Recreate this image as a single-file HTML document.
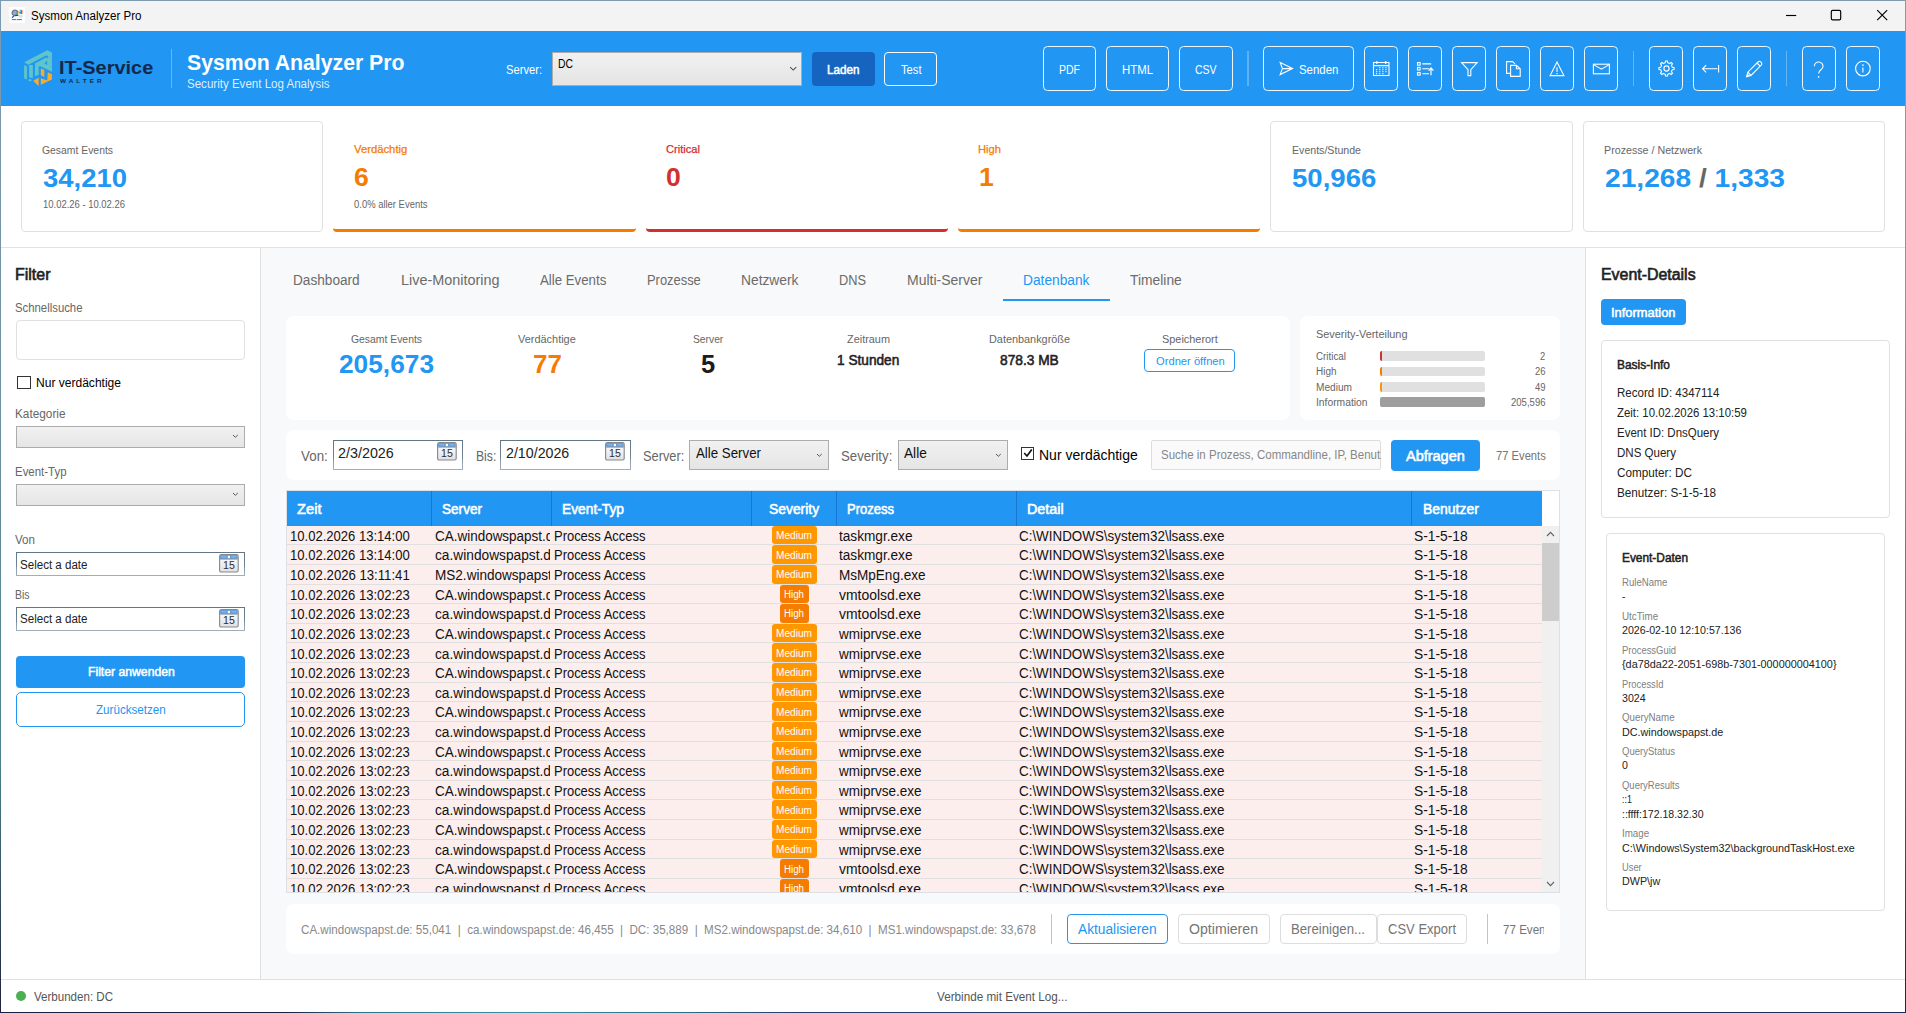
<!DOCTYPE html>
<html lang="de"><head><meta charset="utf-8"><title>Sysmon Analyzer Pro</title>
<style>
html,body{margin:0;padding:0;overflow:hidden}
body{width:1906px;height:1013px;overflow:hidden;position:relative;background:#1e2140;font-family:"Liberation Sans",sans-serif}
.a{position:absolute;box-sizing:border-box}
.t{position:absolute;white-space:pre;line-height:1;transform-origin:0 0}
svg{position:absolute;overflow:visible}
</style></head>
<body>
<div class="a" style="left:0px;top:0px;width:1906px;height:1px;background:#7c9bb1"></div>
<div class="a" style="left:0px;top:1px;width:1px;height:1012px;background:linear-gradient(#7c9bb1,#6f8fa6 40%,#4d8192 75%,#1e2140)"></div>
<div class="a" style="left:1905px;top:1px;width:1px;height:1012px;background:linear-gradient(#7c9bb1,#8496a6 30%,#5a6a80 70%,#1e2140)"></div>
<div class="a" style="left:0px;top:1012px;width:1906px;height:1px;background:linear-gradient(90deg,#1b1d3c 0,#1b1d3c 15%,#2c7688 19%,#3a8fa6 27%,#2a6c8a 36%,#233c6c 42%,#1f2c58 100%)"></div>
<div class="a" style="left:1px;top:1px;width:1904px;height:30px;background:#f3f3f3"></div>
<svg style="left:9px;top:7px" width="16" height="16" viewBox="0 0 16 16"><rect width="16" height="16" fill="#fefefe"/>
<rect x="9.6" y="7.6" width="4" height="3" fill="#d3e5ee"/>
<circle cx="5.9" cy="5.9" r="2.7" fill="#98a6e2" stroke="#6a7684" stroke-width="1.3"/>
<rect x="6.2" y="7.8" width="3.1" height="1.1" fill="#0d4a8a"/>
<rect x="7.2" y="6.3" width="1.1" height="1.6" fill="#35b53a"/><rect x="8.1" y="5.6" width="1.1" height="2.2" fill="#e8742a"/>
<path d="M2.6 10.2 L4.4 8.5 L5.3 9.3 L3.5 11.2 Z" fill="#1f5fc4"/>
<rect x="9" y="4" width="1.5" height="2" fill="#f5c274"/><rect x="10.5" y="2.6" width="1.5" height="2.6" fill="#62d0e2"/><rect x="10.5" y="5" width="1.5" height="1.7" fill="#3a7fd0"/>
<rect x="12.1" y="3" width="1.2" height="4" fill="#e6251c"/><rect x="12.1" y="2.8" width="1.2" height="0.9" fill="#f07a2a"/>
<rect x="2.8" y="12.1" width="4.3" height="1" fill="#55749a"/><rect x="7.7" y="12.1" width="5.3" height="1" fill="#55749a"/></svg>
<span class="t" style="left:31px;top:10px;font-size:12px;color:#000;transform:scaleX(0.9632)">Sysmon Analyzer Pro</span>
<svg style="left:1780px;top:4px" width="116" height="24" viewBox="0 0 116 24"><g fill="none" stroke="#000" stroke-width="1.15"><path d="M6 11.5 H16.2"/><rect x="51.3" y="6.4" width="9.4" height="9.4" rx="1.3"/><path d="M97.2 6.2 L107.2 16.2 M107.2 6.2 L97.2 16.2"/></g></svg>
<div class="a" style="left:1px;top:31px;width:1904px;height:75px;background:#2196f3"></div>
<svg style="left:20px;top:46px" width="40" height="44" viewBox="0 0 921 1013">
<g fill="#5ec6cb"><path d="M95 375 L630 95 L735 150 L735 305 L612 212 L190 434 Z"/>
<path d="M345 402 L600 264 L640 285 L640 240 L735 300 L735 590 L470 468 L430 470 L345 470 Z"/>
<path d="M95 440 L160 470 L160 778 L95 745 Z"/><path d="M210 440 L295 440 L295 745 L210 720 Z"/><path d="M345 468 L430 468 L430 660 L345 695 Z"/>
<path d="M185 782 L235 757 L275 787 L230 815 Z"/></g>
<path d="M560 402 L626 336 L626 436 Z" fill="#2196f3"/>
<g fill="#fbab26"><path d="M480 515 L560 555 L560 715 L480 675 Z"/>
<path d="M480 742 L628 792 L640 605 L735 650 L735 770 L480 895 Z"/>
<path d="M303 800 L430 730 L430 928 Z"/></g>
</svg>
<span class="t" style="left:58.8px;top:59px;font-size:18.5px;color:#14284b;font-weight:bold;transform:scaleX(1.0787)">IT-Service</span>
<span class="t" style="left:60px;top:79px;font-size:5.5px;color:#14284b;font-weight:bold;letter-spacing:2.6px;transform:scaleX(1.1608)">WALTER</span>
<div class="a" style="left:171px;top:49px;width:1px;height:39px;background:rgba(255,255,255,.32)"></div>
<span class="t" style="left:187px;top:52px;font-size:22px;color:#fff;font-weight:bold;transform:scaleX(0.9651)">Sysmon Analyzer Pro</span>
<span class="t" style="left:187px;top:78px;font-size:12px;color:rgba(255,255,255,.86);transform:scaleX(0.9623)">Security Event Log Analysis</span>
<span class="t" style="left:506px;top:64px;font-size:12px;color:#fff;transform:scaleX(0.9305)">Server:</span>
<div class="a" style="left:552px;top:52px;width:250px;height:34px;background:linear-gradient(#f1f1f1,#e4e4e4);border:1px solid #acacac"></div>
<span class="t" style="left:558px;top:58px;font-size:12px;color:#000;transform:scaleX(0.8649)">DC</span>
<svg style="left:788.5px;top:65.6px" width="9" height="6" viewBox="0 0 9 6"><path d="M1.2 1.2 L4.2 4.1 L7.2 1.2" fill="none" stroke="#505050" stroke-width="1.1"/></svg>
<div class="a" style="left:812px;top:52px;width:62.5px;height:34px;background:#1565c0;border-radius:4px"></div>
<span class="t" style="left:827px;top:64px;font-size:12px;color:#fff;-webkit-text-stroke:0.49px currentColor;transform:scaleX(0.9738)">Laden</span>
<div class="a" style="left:884px;top:52px;width:53px;height:34px;border:1px solid #fff;border-radius:4px"></div>
<span class="t" style="left:901px;top:64px;font-size:12px;color:#fff;transform:scaleX(0.9312)">Test</span>
<div class="a" style="left:1043px;top:46px;width:53px;height:45px;border:1px solid rgba(255,255,255,.92);border-radius:4.5px"></div>
<div class="a" style="left:1106px;top:46px;width:63px;height:45px;border:1px solid rgba(255,255,255,.92);border-radius:4.5px"></div>
<div class="a" style="left:1179px;top:46px;width:54px;height:45px;border:1px solid rgba(255,255,255,.92);border-radius:4.5px"></div>
<div class="a" style="left:1263px;top:46px;width:91px;height:45px;border:1px solid rgba(255,255,255,.92);border-radius:4.5px"></div>
<div class="a" style="left:1364px;top:46px;width:34px;height:45px;border:1px solid rgba(255,255,255,.92);border-radius:4.5px"></div>
<div class="a" style="left:1408px;top:46px;width:34px;height:45px;border:1px solid rgba(255,255,255,.92);border-radius:4.5px"></div>
<div class="a" style="left:1452px;top:46px;width:34px;height:45px;border:1px solid rgba(255,255,255,.92);border-radius:4.5px"></div>
<div class="a" style="left:1496px;top:46px;width:34px;height:45px;border:1px solid rgba(255,255,255,.92);border-radius:4.5px"></div>
<div class="a" style="left:1540px;top:46px;width:34px;height:45px;border:1px solid rgba(255,255,255,.92);border-radius:4.5px"></div>
<div class="a" style="left:1584px;top:46px;width:34px;height:45px;border:1px solid rgba(255,255,255,.92);border-radius:4.5px"></div>
<div class="a" style="left:1649px;top:46px;width:34px;height:45px;border:1px solid rgba(255,255,255,.92);border-radius:4.5px"></div>
<div class="a" style="left:1693px;top:46px;width:34px;height:45px;border:1px solid rgba(255,255,255,.92);border-radius:4.5px"></div>
<div class="a" style="left:1737px;top:46px;width:34px;height:45px;border:1px solid rgba(255,255,255,.92);border-radius:4.5px"></div>
<div class="a" style="left:1802px;top:46px;width:34px;height:45px;border:1px solid rgba(255,255,255,.92);border-radius:4.5px"></div>
<div class="a" style="left:1846px;top:46px;width:34px;height:45px;border:1px solid rgba(255,255,255,.92);border-radius:4.5px"></div>
<div class="a" style="left:1247px;top:51px;width:2px;height:35px;background:rgba(255,255,255,.27)"></div>
<div class="a" style="left:1633px;top:51px;width:1px;height:35px;background:rgba(255,255,255,.3)"></div>
<div class="a" style="left:1786px;top:51px;width:1px;height:35px;background:rgba(255,255,255,.3)"></div>
<span class="t" style="left:1059.3px;top:64px;font-size:12px;color:#fff;transform:scaleX(0.8750)">PDF</span>
<span class="t" style="left:1122.3px;top:64px;font-size:12px;color:#fff;transform:scaleX(0.9488)">HTML</span>
<span class="t" style="left:1195.3px;top:64px;font-size:12px;color:#fff;transform:scaleX(0.8749)">CSV</span>
<span class="t" style="left:1298.8px;top:64px;font-size:12px;color:#fff;transform:scaleX(0.9523)">Senden</span>
<svg style="left:1279px;top:61px" width="15" height="15" viewBox="0 0 15 15"><path d="M1.2 1.6 L13.6 7.6 L1.2 13.6 L3.4 7.6 Z M3.4 7.6 H12" fill="none" stroke="#fff" stroke-width="1.1" stroke-linejoin="miter"/></svg>
<svg style="left:1372px;top:60px" width="18" height="18" viewBox="0 0 18 18"><g fill="none" stroke="#fff" stroke-width="1.1" stroke-linejoin="miter"><rect x="1.5" y="2.5" width="15.5" height="13"/><path d="M1.5 5.6 H17 M4.8 1 V4 M13.7 1 V4"/></g><g fill="#fff">
<rect x="7.1" y="7.2" width="1.3" height="1"/><rect x="10.2" y="7.2" width="1.3" height="1"/><rect x="13.3" y="7.2" width="1.3" height="1"/><rect x="4.0" y="9.2" width="1.3" height="1"/><rect x="7.1" y="9.2" width="1.3" height="1"/><rect x="10.2" y="9.2" width="1.3" height="1"/><rect x="13.3" y="9.2" width="1.3" height="1"/><rect x="4.0" y="11.2" width="1.3" height="1"/><rect x="7.1" y="11.2" width="1.3" height="1"/><rect x="10.2" y="11.2" width="1.3" height="1"/><rect x="13.3" y="11.2" width="1.3" height="1"/><rect x="4.0" y="13.2" width="1.3" height="1"/><rect x="7.1" y="13.2" width="1.3" height="1"/><rect x="10.2" y="13.2" width="1.3" height="1"/></g></svg>
<svg style="left:1416px;top:61px" width="18" height="16" viewBox="0 0 18 16"><g fill="none" stroke="#fff" stroke-width="1.1" stroke-linejoin="miter"><rect x="1.5" y="1.6" width="2.6" height="2.6"/><rect x="1.5" y="6.4" width="2.6" height="2.6"/><rect x="1.5" y="11.5" width="2.6" height="2.6"/><path d="M6.3 2.9 H15.2 M6.3 7.7 H13 M6.3 12.8 H13"/><path d="M15 14.2 V7.2 M12.6 9.6 L15 7 L17.4 9.6" stroke-width="1.2"/></g></svg>
<svg style="left:1460px;top:61px" width="19" height="16" viewBox="0 0 19 16"><path d="M1.6 1.6 H17.2 L10.8 8.6 V14.6 H8 V8.6 Z" fill="none" stroke="#fff" stroke-width="1.1" stroke-linejoin="miter" stroke-width="1.2"/></svg>
<svg style="left:1505px;top:60px" width="17" height="18" viewBox="0 0 17 18"><g fill="none" stroke="#fff" stroke-width="1.1" stroke-linejoin="miter" stroke-width="1.15"><path d="M5.2 13.4 H1.6 V1.6 H7.6 L10 3.8"/><path d="M5.6 5.4 H11.4 L15.2 8.8 V16.4 H5.6 Z"/><path d="M11.4 5.6 V8.8 H15"/></g></svg>
<svg style="left:1548px;top:60px" width="18" height="17" viewBox="0 0 18 17"><g fill="none" stroke="#fff" stroke-width="1.1" stroke-linejoin="miter" stroke-width="1.15"><path d="M9 2 L15.9 15.6 H2.1 Z"/><path d="M9 7.2 V12"/></g><rect x="8.4" y="13" width="1.2" height="1.2" fill="#fff"/></svg>
<svg style="left:1592px;top:63px" width="19" height="12" viewBox="0 0 19 12"><g fill="none" stroke="#fff" stroke-width="1.1" stroke-linejoin="miter" stroke-width="1.2"><rect x="1.4" y="1.2" width="16" height="9.6"/><path d="M1.6 1.6 L9.4 6.2 L17.2 1.6"/></g></svg>
<svg style="left:1657.5px;top:60px" width="17" height="17" viewBox="0 0 17 17"><path d="M7.27 2.73 L7.51 0.96 L9.49 0.96 L9.73 2.73 L11.71 3.55 L13.13 2.47 L14.53 3.87 L13.45 5.29 L14.27 7.27 L16.04 7.51 L16.04 9.49 L14.27 9.73 L13.45 11.71 L14.53 13.13 L13.13 14.53 L11.71 13.45 L9.73 14.27 L9.49 16.04 L7.51 16.04 L7.27 14.27 L5.29 13.45 L3.87 14.53 L2.47 13.13 L3.55 11.71 L2.73 9.73 L0.96 9.49 L0.96 7.51 L2.73 7.27 L3.55 5.29 L2.47 3.87 L3.87 2.47 L5.29 3.55 Z" fill="none" stroke="#fff" stroke-width="1.1" stroke-linejoin="miter" stroke-width="1.05"/><circle cx="8.5" cy="8.5" r="2.6" fill="none" stroke="#fff" stroke-width="1.1" stroke-linejoin="miter" stroke-width="1.05"/></svg>
<svg style="left:1701px;top:63.6px" width="19" height="10" viewBox="0 0 19 10"><g fill="none" stroke="#fff" stroke-width="1.1" stroke-linejoin="miter" stroke-width="1.2"><path d="M1.6 4.8 H16.4 M5.2 1.2 L1.6 4.8 L5.2 8.4 M17.6 1 V8.6"/></g></svg>
<svg style="left:1745px;top:60px" width="18" height="18" viewBox="0 0 18 18"><g fill="none" stroke="#fff" stroke-width="1.1" stroke-linejoin="miter" stroke-width="1.15"><path d="M1.6 16.6 L2.8 12.2 L13 2 A1.9 1.9 0 0 1 15.8 2 L16.2 2.4 A1.9 1.9 0 0 1 16.2 5.2 L6 15.4 Z"/><path d="M2.8 12.2 L6 15.4 M12 3 L15.2 6.2"/></g><path d="M1.6 16.6 L2.5 13.5 L4.8 15.7Z" fill="#fff"/></svg>
<svg style="left:1812px;top:60.6px" width="14" height="18" viewBox="0 0 14 18"><path d="M2.4 5.2 A4.3 4.3 0 0 1 11 5.4 C11 8.6 6.6 9 6.6 12.6" fill="none" stroke="#fff" stroke-width="1.1" stroke-linejoin="miter" stroke-width="1.15"/><rect x="5.9" y="15.2" width="1.4" height="1.5" fill="#fff"/></svg>
<svg style="left:1854px;top:60px" width="18" height="18" viewBox="0 0 18 18"><circle cx="8.9" cy="8.6" r="7.3" fill="none" stroke="#fff" stroke-width="1.1" stroke-linejoin="miter" stroke-width="1.15"/><path d="M8.9 7.4 V12.6" fill="none" stroke="#fff" stroke-width="1.1" stroke-linejoin="miter" stroke-width="1.3"/><rect x="8.2" y="4.4" width="1.4" height="1.5" fill="#fff"/></svg>
<div class="a" style="left:1px;top:106px;width:1904px;height:141px;background:#fff"></div>
<div class="a" style="left:1px;top:247px;width:1904px;height:1px;background:#e2e2e2"></div>
<div class="a" style="left:21px;top:121px;width:302.33px;height:111px;border:1px solid #e0e0e0;border-radius:4px;background:#fff"></div>
<div class="a" style="left:1270.33px;top:121px;width:302.33px;height:111px;border:1px solid #e0e0e0;border-radius:4px;background:#fff"></div>
<div class="a" style="left:1582.67px;top:121px;width:302.33px;height:111px;border:1px solid #e0e0e0;border-radius:4px;background:#fff"></div>
<div class="a" style="left:333.33px;top:121px;width:302.33px;height:111px;border-bottom:3px solid #f57c00;border-radius:4px"></div>
<div class="a" style="left:645.67px;top:121px;width:302.33px;height:111px;border-bottom:3px solid #d32f2f;border-radius:4px"></div>
<div class="a" style="left:958px;top:121px;width:302.33px;height:111px;border-bottom:3px solid #f57c00;border-radius:4px"></div>
<span class="t" style="left:42px;top:145px;font-size:11px;color:#666;transform:scaleX(0.9441)">Gesamt Events</span>
<span class="t" style="left:43px;top:165px;font-size:26px;color:#2196f3;font-weight:bold;transform:scaleX(1.0562)">34,210</span>
<span class="t" style="left:43px;top:200px;font-size:10px;color:#666;transform:scaleX(0.9452)">10.02.26 - 10.02.26</span>
<span class="t" style="left:353.5px;top:144px;font-size:11px;color:#f57c00;-webkit-text-stroke:.25px currentColor;transform:scaleX(1.0253)">Verdächtig</span>
<span class="t" style="left:354px;top:164px;font-size:26px;color:#f57c00;font-weight:bold;transform:scaleX(1.0229)">6</span>
<span class="t" style="left:354px;top:200px;font-size:10px;color:#666;transform:scaleX(0.9444)">0.0% aller Events</span>
<span class="t" style="left:666px;top:144px;font-size:11px;color:#d32f2f;-webkit-text-stroke:.25px currentColor;transform:scaleX(1.0112)">Critical</span>
<span class="t" style="left:666.3px;top:164px;font-size:26px;color:#d32f2f;font-weight:bold;transform:scaleX(1.0229)">0</span>
<span class="t" style="left:978.3px;top:144px;font-size:11px;color:#f57c00;-webkit-text-stroke:.25px currentColor;transform:scaleX(1.0166)">High</span>
<span class="t" style="left:978.6px;top:164px;font-size:26px;color:#f57c00;font-weight:bold;transform:scaleX(1.0229)">1</span>
<span class="t" style="left:1291.6px;top:145px;font-size:11px;color:#666;transform:scaleX(0.9642)">Events/Stunde</span>
<span class="t" style="left:1292.3px;top:165px;font-size:26px;color:#2196f3;font-weight:bold;transform:scaleX(1.0600)">50,966</span>
<span class="t" style="left:1604px;top:145px;font-size:11px;color:#666;transform:scaleX(0.9715)">Prozesse / Netzwerk</span>
<span class="t" style="left:1604.6px;top:165px;font-size:26px;color:#2196f3;font-weight:bold;transform:scaleX(1.0825)">21,268 <span style="color:#666">/</span> 1,333</span>
<div class="a" style="left:1px;top:248px;width:259px;height:731px;background:#fff"></div>
<div class="a" style="left:260px;top:248px;width:1px;height:731px;background:#e0e0e0"></div>
<div class="a" style="left:261px;top:248px;width:1324px;height:731px;background:#f8f9fa"></div>
<div class="a" style="left:1585px;top:248px;width:1px;height:731px;background:#e0e0e0"></div>
<div class="a" style="left:1586px;top:248px;width:319px;height:731px;background:#fff"></div>
<div class="a" style="left:1px;top:979px;width:1904px;height:1px;background:#e0e0e0"></div>
<div class="a" style="left:1px;top:980px;width:1904px;height:32px;background:#fff"></div>
<span class="t" style="left:15.4px;top:267px;font-size:16px;color:#212121;-webkit-text-stroke:0.61px currentColor;transform:scaleX(0.9982)">Filter</span>
<span class="t" style="left:15.4px;top:302px;font-size:12px;color:#666;transform:scaleX(0.9455)">Schnellsuche</span>
<div class="a" style="left:16px;top:320px;width:229px;height:40px;border:1px solid #e0e0e0;border-radius:4px;background:#fff"></div>
<div class="a" style="left:17px;top:376px;width:13.6px;height:13px;border:1px solid #333;background:#fff"></div>
<span class="t" style="left:36.3px;top:377px;font-size:12px;color:#000;transform:scaleX(1.0033)">Nur verdächtige</span>
<span class="t" style="left:15.4px;top:408px;font-size:12px;color:#666;transform:scaleX(0.9830)">Kategorie</span>
<div class="a" style="left:16px;top:426px;width:229px;height:22px;background:linear-gradient(#f1f1f1,#e5e5e5);border:1px solid #acacac"></div>
<svg style="left:231.5px;top:434px" width="7" height="5" viewBox="0 0 7 5"><path d="M1 1 L3.4 3.3 L5.8 1" fill="none" stroke="#555" stroke-width="1"/></svg>
<span class="t" style="left:15.4px;top:466px;font-size:12px;color:#666;transform:scaleX(0.9532)">Event-Typ</span>
<div class="a" style="left:16px;top:484px;width:229px;height:22px;background:linear-gradient(#f1f1f1,#e5e5e5);border:1px solid #acacac"></div>
<svg style="left:231.5px;top:492px" width="7" height="5" viewBox="0 0 7 5"><path d="M1 1 L3.4 3.3 L5.8 1" fill="none" stroke="#555" stroke-width="1"/></svg>
<span class="t" style="left:15.4px;top:534px;font-size:12px;color:#666;transform:scaleX(0.9660)">Von</span>
<div class="a" style="left:16px;top:552px;width:229px;height:24px;border:1px solid transparent;background:linear-gradient(#fff,#fff) padding-box,linear-gradient(to top,#a3aeb9 0,#8399a9 37.5%,#718597 37.5%,#617584 100%) border-box"></div>
<span class="t" style="left:20px;top:559px;font-size:12px;color:#222;transform:scaleX(0.9634)">Select a date</span>
<svg style="left:219px;top:554px" width="20" height="19" viewBox="0 0 20 19"><defs><linearGradient id="cg219554" x1="0" y1="0" x2="0" y2="1"><stop offset="0" stop-color="#fff"/><stop offset="1" stop-color="#dfe1e4"/></linearGradient></defs><rect x=".6" y=".6" width="18.6" height="17.4" rx="1.6" fill="url(#cg219554)" stroke="#85878c" stroke-width="1.1"/><rect x="1.1" y="1.1" width="17.6" height="3.7" fill="#5c9bdc"/><rect x="1.1" y="4.6" width="17.6" height=".9" fill="#6f7f92"/><circle cx="9.9" cy="2.9" r="1.25" fill="#fff"/><rect x="2.4" y="2.3" width="5" height="1.1" fill="#8fbbe9"/><rect x="12.4" y="2.3" width="5" height="1.1" fill="#8fbbe9"/><text x="9.9" y="15.1" text-anchor="middle" font-family="'Liberation Sans',sans-serif" font-size="10.4" fill="#2e2e2e" textLength="11.8" lengthAdjust="spacingAndGlyphs">15</text></svg>
<span class="t" style="left:15.4px;top:589px;font-size:12px;color:#666;transform:scaleX(0.8697)">Bis</span>
<div class="a" style="left:16px;top:607px;width:229px;height:24px;border:1px solid transparent;background:linear-gradient(#fff,#fff) padding-box,linear-gradient(to top,#a3aeb9 0,#8399a9 37.5%,#718597 37.5%,#617584 100%) border-box"></div>
<span class="t" style="left:20px;top:613px;font-size:12px;color:#222;transform:scaleX(0.9634)">Select a date</span>
<svg style="left:219px;top:609px" width="20" height="19" viewBox="0 0 20 19"><defs><linearGradient id="cg219609" x1="0" y1="0" x2="0" y2="1"><stop offset="0" stop-color="#fff"/><stop offset="1" stop-color="#dfe1e4"/></linearGradient></defs><rect x=".6" y=".6" width="18.6" height="17.4" rx="1.6" fill="url(#cg219609)" stroke="#85878c" stroke-width="1.1"/><rect x="1.1" y="1.1" width="17.6" height="3.7" fill="#5c9bdc"/><rect x="1.1" y="4.6" width="17.6" height=".9" fill="#6f7f92"/><circle cx="9.9" cy="2.9" r="1.25" fill="#fff"/><rect x="2.4" y="2.3" width="5" height="1.1" fill="#8fbbe9"/><rect x="12.4" y="2.3" width="5" height="1.1" fill="#8fbbe9"/><text x="9.9" y="15.1" text-anchor="middle" font-family="'Liberation Sans',sans-serif" font-size="10.4" fill="#2e2e2e" textLength="11.8" lengthAdjust="spacingAndGlyphs">15</text></svg>
<div class="a" style="left:16px;top:656px;width:229px;height:32px;background:#2196f3;border-radius:4px"></div>
<span class="t" style="left:87.5px;top:666px;font-size:12px;color:#fff;-webkit-text-stroke:0.49px currentColor;transform:scaleX(1.0165)">Filter anwenden</span>
<div class="a" style="left:16px;top:692px;width:229px;height:35px;border:1px solid #2196f3;border-radius:5px;background:#fff"></div>
<span class="t" style="left:95.8px;top:704px;font-size:12px;color:#2196f3;transform:scaleX(0.9690)">Zurücksetzen</span>
<span class="t" style="left:293.3px;top:273px;font-size:14px;color:#6b6b6b;transform:scaleX(0.9737)">Dashboard</span>
<span class="t" style="left:400.8px;top:273px;font-size:14px;color:#6b6b6b;transform:scaleX(1.0291)">Live-Monitoring</span>
<span class="t" style="left:540px;top:273px;font-size:14px;color:#6b6b6b;transform:scaleX(0.9465)">Alle Events</span>
<span class="t" style="left:646.8px;top:273px;font-size:14px;color:#6b6b6b;transform:scaleX(0.9219)">Prozesse</span>
<span class="t" style="left:740.5px;top:273px;font-size:14px;color:#6b6b6b;transform:scaleX(0.9853)">Netzwerk</span>
<span class="t" style="left:838.8px;top:273px;font-size:14px;color:#6b6b6b;transform:scaleX(0.9133)">DNS</span>
<span class="t" style="left:906.5px;top:273px;font-size:14px;color:#6b6b6b;transform:scaleX(1.0004)">Multi-Server</span>
<span class="t" style="left:1023px;top:273px;font-size:14px;color:#2196f3;transform:scaleX(0.9820)">Datenbank</span>
<span class="t" style="left:1129.5px;top:273px;font-size:14px;color:#6b6b6b;transform:scaleX(0.9887)">Timeline</span>
<div class="a" style="left:1002.5px;top:299px;width:107px;height:2px;background:#2196f3"></div>
<div class="a" style="left:286px;top:316px;width:1004px;height:103.5px;background:#fff;border-radius:8px"></div>
<span class="t" style="left:350.8px;top:334px;font-size:11px;color:#666;transform:scaleX(0.9441)">Gesamt Events</span>
<span class="t" style="left:338.8px;top:351px;font-size:26px;color:#2196f3;font-weight:bold;transform:scaleX(1.0108)">205,673</span>
<span class="t" style="left:518.1px;top:334px;font-size:11px;color:#666;transform:scaleX(0.9947)">Verdächtige</span>
<span class="t" style="left:532.6px;top:351px;font-size:26px;color:#f57c00;font-weight:bold;transform:scaleX(0.9958)">77</span>
<span class="t" style="left:692.55px;top:334px;font-size:11px;color:#666;transform:scaleX(0.9350)">Server</span>
<span class="t" style="left:700.6px;top:351px;font-size:26px;color:#1c1c1c;font-weight:bold;transform:scaleX(0.9814)">5</span>
<span class="t" style="left:846.7px;top:334px;font-size:11px;color:#666;transform:scaleX(0.9906)">Zeitraum</span>
<span class="t" style="left:837.05px;top:353px;font-size:14px;color:#222;-webkit-text-stroke:0.55px currentColor;transform:scaleX(0.9758)">1 Stunden</span>
<span class="t" style="left:988.8px;top:334px;font-size:11px;color:#666;transform:scaleX(0.9884)">Datenbankgröße</span>
<span class="t" style="left:999.9px;top:353px;font-size:14px;color:#222;-webkit-text-stroke:0.55px currentColor;transform:scaleX(0.9810)">878.3 MB</span>
<span class="t" style="left:1161.6px;top:334px;font-size:11px;color:#666;transform:scaleX(0.9917)">Speicherort</span>
<div class="a" style="left:1144px;top:349px;width:91px;height:23.4px;border:1px solid #2196f3;border-radius:4px;background:#fff"></div>
<span class="t" style="left:1155.5px;top:356px;font-size:11px;color:#2196f3;transform:scaleX(1.0164)">Ordner öffnen</span>
<div class="a" style="left:1300px;top:316px;width:260px;height:103.5px;background:#fff;border-radius:8px"></div>
<span class="t" style="left:1315.5px;top:329px;font-size:11px;color:#666;transform:scaleX(0.9910)">Severity-Verteilung</span>
<span class="t" style="left:1315.5px;top:352px;font-size:10px;color:#666;transform:scaleX(0.9816)">Critical</span>
<div class="a" style="left:1380px;top:351px;width:105px;height:9.8px;background:#e0e0e0;border-radius:2px;overflow:hidden"><div class="a" style="left:0;top:0;height:100%;width:2px;background:#d32f2f"></div></div>
<span class="t" style="left:1540.3px;top:352px;font-size:10px;color:#666;transform:scaleX(0.9348)">2</span>
<span class="t" style="left:1315.5px;top:367px;font-size:10px;color:#666;transform:scaleX(0.9962)">High</span>
<div class="a" style="left:1380px;top:366.6px;width:105px;height:9.8px;background:#e0e0e0;border-radius:2px;overflow:hidden"><div class="a" style="left:0;top:0;height:100%;width:2px;background:#f57c00"></div></div>
<span class="t" style="left:1535px;top:367px;font-size:10px;color:#666;transform:scaleX(0.9438)">26</span>
<span class="t" style="left:1315.5px;top:383px;font-size:10px;color:#666;transform:scaleX(1.0119)">Medium</span>
<div class="a" style="left:1380px;top:382px;width:105px;height:9.8px;background:#e0e0e0;border-radius:2px;overflow:hidden"><div class="a" style="left:0;top:0;height:100%;width:2px;background:#ff9800"></div></div>
<span class="t" style="left:1535px;top:383px;font-size:10px;color:#666;transform:scaleX(0.9438)">49</span>
<span class="t" style="left:1315.5px;top:398px;font-size:10px;color:#666;transform:scaleX(1.0294)">Information</span>
<div class="a" style="left:1380px;top:397.3px;width:105px;height:9.8px;background:#e0e0e0;border-radius:2px;overflow:hidden"><div class="a" style="left:0;top:0;height:100%;width:105px;background:#9e9e9e"></div></div>
<span class="t" style="left:1511px;top:398px;font-size:10px;color:#666;transform:scaleX(0.9542)">205,596</span>
<div class="a" style="left:286px;top:430px;width:1274px;height:50px;background:#fff;border-radius:8px"></div>
<span class="t" style="left:301.3px;top:449px;font-size:14px;color:#666;transform:scaleX(0.9561)">Von:</span>
<div class="a" style="left:333px;top:440px;width:130px;height:30px;border:1px solid transparent;background:linear-gradient(#fff,#fff) padding-box,linear-gradient(to top,#a3aeb9 0,#8399a9 37.5%,#718597 37.5%,#617584 100%) border-box"></div>
<span class="t" style="left:338px;top:446px;font-size:14px;color:#222;transform:scaleX(1.0239)">2/3/2026</span>
<svg style="left:437px;top:442.4px" width="20" height="19" viewBox="0 0 20 19"><defs><linearGradient id="cg437442" x1="0" y1="0" x2="0" y2="1"><stop offset="0" stop-color="#fff"/><stop offset="1" stop-color="#dfe1e4"/></linearGradient></defs><rect x=".6" y=".6" width="18.6" height="17.4" rx="1.6" fill="url(#cg437442)" stroke="#85878c" stroke-width="1.1"/><rect x="1.1" y="1.1" width="17.6" height="3.7" fill="#5c9bdc"/><rect x="1.1" y="4.6" width="17.6" height=".9" fill="#6f7f92"/><circle cx="9.9" cy="2.9" r="1.25" fill="#fff"/><rect x="2.4" y="2.3" width="5" height="1.1" fill="#8fbbe9"/><rect x="12.4" y="2.3" width="5" height="1.1" fill="#8fbbe9"/><text x="9.9" y="15.1" text-anchor="middle" font-family="'Liberation Sans',sans-serif" font-size="10.4" fill="#2e2e2e" textLength="11.8" lengthAdjust="spacingAndGlyphs">15</text></svg>
<span class="t" style="left:475.5px;top:449px;font-size:14px;color:#666;transform:scaleX(0.8696)">Bis:</span>
<div class="a" style="left:500px;top:440px;width:131px;height:30px;border:1px solid transparent;background:linear-gradient(#fff,#fff) padding-box,linear-gradient(to top,#a3aeb9 0,#8399a9 37.5%,#718597 37.5%,#617584 100%) border-box"></div>
<span class="t" style="left:505.5px;top:446px;font-size:14px;color:#222;transform:scaleX(1.0161)">2/10/2026</span>
<svg style="left:604.5px;top:442.4px" width="20" height="19" viewBox="0 0 20 19"><defs><linearGradient id="cg604442" x1="0" y1="0" x2="0" y2="1"><stop offset="0" stop-color="#fff"/><stop offset="1" stop-color="#dfe1e4"/></linearGradient></defs><rect x=".6" y=".6" width="18.6" height="17.4" rx="1.6" fill="url(#cg604442)" stroke="#85878c" stroke-width="1.1"/><rect x="1.1" y="1.1" width="17.6" height="3.7" fill="#5c9bdc"/><rect x="1.1" y="4.6" width="17.6" height=".9" fill="#6f7f92"/><circle cx="9.9" cy="2.9" r="1.25" fill="#fff"/><rect x="2.4" y="2.3" width="5" height="1.1" fill="#8fbbe9"/><rect x="12.4" y="2.3" width="5" height="1.1" fill="#8fbbe9"/><text x="9.9" y="15.1" text-anchor="middle" font-family="'Liberation Sans',sans-serif" font-size="10.4" fill="#2e2e2e" textLength="11.8" lengthAdjust="spacingAndGlyphs">15</text></svg>
<span class="t" style="left:643px;top:449px;font-size:14px;color:#666;transform:scaleX(0.9152)">Server:</span>
<div class="a" style="left:689px;top:440px;width:140px;height:30px;background:linear-gradient(#f1f1f1,#e5e5e5);border:1px solid #acacac"></div>
<span class="t" style="left:695.5px;top:446px;font-size:14px;color:#111;transform:scaleX(0.9493)">Alle Server</span>
<svg style="left:816px;top:452.5px" width="7" height="5" viewBox="0 0 7 5"><path d="M1 1 L3.4 3.3 L5.8 1" fill="none" stroke="#555" stroke-width="1"/></svg>
<span class="t" style="left:841.3px;top:449px;font-size:14px;color:#666;transform:scaleX(0.9418)">Severity:</span>
<div class="a" style="left:898px;top:440px;width:110.3px;height:30px;background:linear-gradient(#f1f1f1,#e5e5e5);border:1px solid #acacac"></div>
<span class="t" style="left:904.3px;top:446px;font-size:14px;color:#111;transform:scaleX(0.9761)">Alle</span>
<svg style="left:995px;top:452.5px" width="7" height="5" viewBox="0 0 7 5"><path d="M1 1 L3.4 3.3 L5.8 1" fill="none" stroke="#555" stroke-width="1"/></svg>
<div class="a" style="left:1021px;top:447px;width:13px;height:13px;border:1px solid #333;background:#fff"></div>
<svg style="left:1022.6px;top:448.4px" width="10" height="10" viewBox="0 0 10 10"><path d="M1.2 5 L4 8 L8.8 1.4" fill="none" stroke="#111" stroke-width="1.7"/></svg>
<span class="t" style="left:1039.4px;top:448px;font-size:14px;color:#000;transform:scaleX(0.9997)">Nur verdächtige</span>
<div class="a" style="left:1151px;top:440px;width:230.3px;height:30px;background:#fafafa;border:1px solid #ddd;border-radius:2px"></div>
<div class="a" style="left:1152px;top:441px;width:228.5px;height:28px;overflow:hidden;"><span class="t" style="left:9.3px;top:7px;font-size:13px;color:#878787;transform:scaleX(0.8850)">Suche in Prozess, Commandline, IP, Benutzer...</span></div>
<div class="a" style="left:1391px;top:440px;width:89px;height:30.5px;background:#2196f3;border-radius:4px"></div>
<span class="t" style="left:1406.3px;top:449px;font-size:14px;color:#fff;-webkit-text-stroke:0.55px currentColor;transform:scaleX(1.0347)">Abfragen</span>
<span class="t" style="left:1495.8px;top:449px;font-size:13px;color:#757575;transform:scaleX(0.8612)">77 Events</span>
<div class="a" style="left:286px;top:490px;width:1274px;height:403px;border:1px solid #dde1e6;background:#fff"></div>
<div class="a" style="left:287px;top:491px;width:1255px;height:35px;background:#2196f3"></div>
<div class="a" style="left:431px;top:491px;width:1px;height:35px;background:#1976d2"></div>
<div class="a" style="left:551px;top:491px;width:1px;height:35px;background:#1976d2"></div>
<div class="a" style="left:751px;top:491px;width:1px;height:35px;background:#1976d2"></div>
<div class="a" style="left:836px;top:491px;width:1px;height:35px;background:#1976d2"></div>
<div class="a" style="left:1016px;top:491px;width:1px;height:35px;background:#1976d2"></div>
<div class="a" style="left:1411px;top:491px;width:1px;height:35px;background:#1976d2"></div>
<span class="t" style="left:297.2px;top:502px;font-size:14px;color:#fff;-webkit-text-stroke:0.55px currentColor;transform:scaleX(1.0495)">Zeit</span>
<span class="t" style="left:442.2px;top:502px;font-size:14px;color:#fff;-webkit-text-stroke:0.55px currentColor;transform:scaleX(0.9701)">Server</span>
<span class="t" style="left:562.2px;top:502px;font-size:14px;color:#fff;-webkit-text-stroke:0.55px currentColor;transform:scaleX(0.9836)">Event-Typ</span>
<span class="t" style="left:768.7px;top:502px;font-size:14px;color:#fff;-webkit-text-stroke:0.55px currentColor;transform:scaleX(0.9905)">Severity</span>
<span class="t" style="left:847.2px;top:502px;font-size:14px;color:#fff;-webkit-text-stroke:0.55px currentColor;transform:scaleX(0.9293)">Prozess</span>
<span class="t" style="left:1027.3px;top:502px;font-size:14px;color:#fff;-webkit-text-stroke:0.55px currentColor;transform:scaleX(1.0252)">Detail</span>
<span class="t" style="left:1422.5px;top:502px;font-size:14px;color:#fff;-webkit-text-stroke:0.55px currentColor;transform:scaleX(0.9956)">Benutzer</span>
<div class="a" style="left:287px;top:526px;width:1255px;height:366px;overflow:hidden;"><div class="a" style="left:0;top:0px;width:1255px;height:19px;background:#fbeeed;border-bottom:1px solid #e0e0e0"></div><span class="t" style="left:3.3px;top:3px;font-size:14px;color:#111;transform:scaleX(0.9317)">10.02.2026 13:14:00</span><div class="a" style="left:145px;top:0px;width:118px;height:19px;overflow:hidden"><span class="t" style="left:2.5px;top:3px;font-size:14px;color:#111;transform:scaleX(0.9621)">CA.windowspapst.de</span></div><span class="t" style="left:267.2px;top:3px;font-size:14px;color:#111;transform:scaleX(0.9248)">Process Access</span><div class="a" style="left:485px;top:0px;width:45px;height:18px;background:#ff9800;border-radius:3px"></div><span class="t" style="left:489.2px;top:5px;font-size:10px;color:#fff;transform:scaleX(1.0119)">Medium</span><span class="t" style="left:552.2px;top:3px;font-size:14px;color:#111;transform:scaleX(0.9737)">taskmgr.exe</span><span class="t" style="left:732.4px;top:3px;font-size:14px;color:#111;transform:scaleX(0.9571)">C:\WINDOWS\system32\lsass.exe</span><span class="t" style="left:1127.2px;top:3px;font-size:14px;color:#111;transform:scaleX(0.9841)">S-1-5-18</span><div class="a" style="left:0;top:19px;width:1255px;height:20px;background:#fbeeed;border-bottom:1px solid #e0e0e0"></div><span class="t" style="left:3.3px;top:22px;font-size:14px;color:#111;transform:scaleX(0.9317)">10.02.2026 13:14:00</span><div class="a" style="left:145px;top:19px;width:118px;height:20px;overflow:hidden"><span class="t" style="left:2.5px;top:3px;font-size:14px;color:#111;transform:scaleX(0.9803)">ca.windowspapst.de</span></div><span class="t" style="left:267.2px;top:22px;font-size:14px;color:#111;transform:scaleX(0.9248)">Process Access</span><div class="a" style="left:485px;top:19px;width:45px;height:19px;background:#ff9800;border-radius:3px"></div><span class="t" style="left:489.2px;top:25px;font-size:10px;color:#fff;transform:scaleX(1.0119)">Medium</span><span class="t" style="left:552.2px;top:22px;font-size:14px;color:#111;transform:scaleX(0.9737)">taskmgr.exe</span><span class="t" style="left:732.4px;top:22px;font-size:14px;color:#111;transform:scaleX(0.9571)">C:\WINDOWS\system32\lsass.exe</span><span class="t" style="left:1127.2px;top:22px;font-size:14px;color:#111;transform:scaleX(0.9841)">S-1-5-18</span><div class="a" style="left:0;top:39px;width:1255px;height:20px;background:#fbeeed;border-bottom:1px solid #e0e0e0"></div><span class="t" style="left:3.3px;top:42px;font-size:14px;color:#111;transform:scaleX(0.9394)">10.02.2026 13:11:41</span><div class="a" style="left:145px;top:39px;width:118px;height:20px;overflow:hidden"><span class="t" style="left:2.5px;top:3px;font-size:14px;color:#111;transform:scaleX(0.9680)">MS2.windowspapst.de</span></div><span class="t" style="left:267.2px;top:42px;font-size:14px;color:#111;transform:scaleX(0.9248)">Process Access</span><div class="a" style="left:485px;top:39px;width:45px;height:19px;background:#ff9800;border-radius:3px"></div><span class="t" style="left:489.2px;top:44px;font-size:10px;color:#fff;transform:scaleX(1.0119)">Medium</span><span class="t" style="left:552.2px;top:42px;font-size:14px;color:#111;transform:scaleX(0.9666)">MsMpEng.exe</span><span class="t" style="left:732.4px;top:42px;font-size:14px;color:#111;transform:scaleX(0.9571)">C:\WINDOWS\system32\lsass.exe</span><span class="t" style="left:1127.2px;top:42px;font-size:14px;color:#111;transform:scaleX(0.9841)">S-1-5-18</span><div class="a" style="left:0;top:59px;width:1255px;height:19px;background:#fbeeed;border-bottom:1px solid #e0e0e0"></div><span class="t" style="left:3.3px;top:62px;font-size:14px;color:#111;transform:scaleX(0.9317)">10.02.2026 13:02:23</span><div class="a" style="left:145px;top:59px;width:118px;height:19px;overflow:hidden"><span class="t" style="left:2.5px;top:3px;font-size:14px;color:#111;transform:scaleX(0.9621)">CA.windowspapst.de</span></div><span class="t" style="left:267.2px;top:62px;font-size:14px;color:#111;transform:scaleX(0.9248)">Process Access</span><div class="a" style="left:493px;top:59px;width:28.5px;height:18px;background:#f57c00;border-radius:3px"></div><span class="t" style="left:497.2px;top:64px;font-size:10px;color:#fff;transform:scaleX(0.9719)">High</span><span class="t" style="left:552.2px;top:62px;font-size:14px;color:#111;transform:scaleX(0.9941)">vmtoolsd.exe</span><span class="t" style="left:732.4px;top:62px;font-size:14px;color:#111;transform:scaleX(0.9571)">C:\WINDOWS\system32\lsass.exe</span><span class="t" style="left:1127.2px;top:62px;font-size:14px;color:#111;transform:scaleX(0.9841)">S-1-5-18</span><div class="a" style="left:0;top:78px;width:1255px;height:20px;background:#fbeeed;border-bottom:1px solid #e0e0e0"></div><span class="t" style="left:3.3px;top:81px;font-size:14px;color:#111;transform:scaleX(0.9317)">10.02.2026 13:02:23</span><div class="a" style="left:145px;top:78px;width:118px;height:20px;overflow:hidden"><span class="t" style="left:2.5px;top:3px;font-size:14px;color:#111;transform:scaleX(0.9803)">ca.windowspapst.de</span></div><span class="t" style="left:267.2px;top:81px;font-size:14px;color:#111;transform:scaleX(0.9248)">Process Access</span><div class="a" style="left:493px;top:78px;width:28.5px;height:19px;background:#f57c00;border-radius:3px"></div><span class="t" style="left:497.2px;top:83px;font-size:10px;color:#fff;transform:scaleX(0.9719)">High</span><span class="t" style="left:552.2px;top:81px;font-size:14px;color:#111;transform:scaleX(0.9941)">vmtoolsd.exe</span><span class="t" style="left:732.4px;top:81px;font-size:14px;color:#111;transform:scaleX(0.9571)">C:\WINDOWS\system32\lsass.exe</span><span class="t" style="left:1127.2px;top:81px;font-size:14px;color:#111;transform:scaleX(0.9841)">S-1-5-18</span><div class="a" style="left:0;top:98px;width:1255px;height:19px;background:#fbeeed;border-bottom:1px solid #e0e0e0"></div><span class="t" style="left:3.3px;top:101px;font-size:14px;color:#111;transform:scaleX(0.9317)">10.02.2026 13:02:23</span><div class="a" style="left:145px;top:98px;width:118px;height:19px;overflow:hidden"><span class="t" style="left:2.5px;top:3px;font-size:14px;color:#111;transform:scaleX(0.9621)">CA.windowspapst.de</span></div><span class="t" style="left:267.2px;top:101px;font-size:14px;color:#111;transform:scaleX(0.9248)">Process Access</span><div class="a" style="left:485px;top:98px;width:45px;height:18px;background:#ff9800;border-radius:3px"></div><span class="t" style="left:489.2px;top:103px;font-size:10px;color:#fff;transform:scaleX(1.0119)">Medium</span><span class="t" style="left:552.2px;top:101px;font-size:14px;color:#111;transform:scaleX(0.9639)">wmiprvse.exe</span><span class="t" style="left:732.4px;top:101px;font-size:14px;color:#111;transform:scaleX(0.9571)">C:\WINDOWS\system32\lsass.exe</span><span class="t" style="left:1127.2px;top:101px;font-size:14px;color:#111;transform:scaleX(0.9841)">S-1-5-18</span><div class="a" style="left:0;top:117px;width:1255px;height:20px;background:#fbeeed;border-bottom:1px solid #e0e0e0"></div><span class="t" style="left:3.3px;top:121px;font-size:14px;color:#111;transform:scaleX(0.9317)">10.02.2026 13:02:23</span><div class="a" style="left:145px;top:117px;width:118px;height:20px;overflow:hidden"><span class="t" style="left:2.5px;top:4px;font-size:14px;color:#111;transform:scaleX(0.9803)">ca.windowspapst.de</span></div><span class="t" style="left:267.2px;top:121px;font-size:14px;color:#111;transform:scaleX(0.9248)">Process Access</span><div class="a" style="left:485px;top:117px;width:45px;height:19px;background:#ff9800;border-radius:3px"></div><span class="t" style="left:489.2px;top:123px;font-size:10px;color:#fff;transform:scaleX(1.0119)">Medium</span><span class="t" style="left:552.2px;top:121px;font-size:14px;color:#111;transform:scaleX(0.9639)">wmiprvse.exe</span><span class="t" style="left:732.4px;top:121px;font-size:14px;color:#111;transform:scaleX(0.9571)">C:\WINDOWS\system32\lsass.exe</span><span class="t" style="left:1127.2px;top:121px;font-size:14px;color:#111;transform:scaleX(0.9841)">S-1-5-18</span><div class="a" style="left:0;top:137px;width:1255px;height:20px;background:#fbeeed;border-bottom:1px solid #e0e0e0"></div><span class="t" style="left:3.3px;top:140px;font-size:14px;color:#111;transform:scaleX(0.9317)">10.02.2026 13:02:23</span><div class="a" style="left:145px;top:137px;width:118px;height:20px;overflow:hidden"><span class="t" style="left:2.5px;top:3px;font-size:14px;color:#111;transform:scaleX(0.9621)">CA.windowspapst.de</span></div><span class="t" style="left:267.2px;top:140px;font-size:14px;color:#111;transform:scaleX(0.9248)">Process Access</span><div class="a" style="left:485px;top:137px;width:45px;height:19px;background:#ff9800;border-radius:3px"></div><span class="t" style="left:489.2px;top:142px;font-size:10px;color:#fff;transform:scaleX(1.0119)">Medium</span><span class="t" style="left:552.2px;top:140px;font-size:14px;color:#111;transform:scaleX(0.9639)">wmiprvse.exe</span><span class="t" style="left:732.4px;top:140px;font-size:14px;color:#111;transform:scaleX(0.9571)">C:\WINDOWS\system32\lsass.exe</span><span class="t" style="left:1127.2px;top:140px;font-size:14px;color:#111;transform:scaleX(0.9841)">S-1-5-18</span><div class="a" style="left:0;top:157px;width:1255px;height:19px;background:#fbeeed;border-bottom:1px solid #e0e0e0"></div><span class="t" style="left:3.3px;top:160px;font-size:14px;color:#111;transform:scaleX(0.9317)">10.02.2026 13:02:23</span><div class="a" style="left:145px;top:157px;width:118px;height:19px;overflow:hidden"><span class="t" style="left:2.5px;top:3px;font-size:14px;color:#111;transform:scaleX(0.9803)">ca.windowspapst.de</span></div><span class="t" style="left:267.2px;top:160px;font-size:14px;color:#111;transform:scaleX(0.9248)">Process Access</span><div class="a" style="left:485px;top:157px;width:45px;height:18px;background:#ff9800;border-radius:3px"></div><span class="t" style="left:489.2px;top:162px;font-size:10px;color:#fff;transform:scaleX(1.0119)">Medium</span><span class="t" style="left:552.2px;top:160px;font-size:14px;color:#111;transform:scaleX(0.9639)">wmiprvse.exe</span><span class="t" style="left:732.4px;top:160px;font-size:14px;color:#111;transform:scaleX(0.9571)">C:\WINDOWS\system32\lsass.exe</span><span class="t" style="left:1127.2px;top:160px;font-size:14px;color:#111;transform:scaleX(0.9841)">S-1-5-18</span><div class="a" style="left:0;top:176px;width:1255px;height:20px;background:#fbeeed;border-bottom:1px solid #e0e0e0"></div><span class="t" style="left:3.3px;top:179px;font-size:14px;color:#111;transform:scaleX(0.9317)">10.02.2026 13:02:23</span><div class="a" style="left:145px;top:176px;width:118px;height:20px;overflow:hidden"><span class="t" style="left:2.5px;top:3px;font-size:14px;color:#111;transform:scaleX(0.9621)">CA.windowspapst.de</span></div><span class="t" style="left:267.2px;top:179px;font-size:14px;color:#111;transform:scaleX(0.9248)">Process Access</span><div class="a" style="left:485px;top:176px;width:45px;height:19px;background:#ff9800;border-radius:3px"></div><span class="t" style="left:489.2px;top:182px;font-size:10px;color:#fff;transform:scaleX(1.0119)">Medium</span><span class="t" style="left:552.2px;top:179px;font-size:14px;color:#111;transform:scaleX(0.9639)">wmiprvse.exe</span><span class="t" style="left:732.4px;top:179px;font-size:14px;color:#111;transform:scaleX(0.9571)">C:\WINDOWS\system32\lsass.exe</span><span class="t" style="left:1127.2px;top:179px;font-size:14px;color:#111;transform:scaleX(0.9841)">S-1-5-18</span><div class="a" style="left:0;top:196px;width:1255px;height:20px;background:#fbeeed;border-bottom:1px solid #e0e0e0"></div><span class="t" style="left:3.3px;top:199px;font-size:14px;color:#111;transform:scaleX(0.9317)">10.02.2026 13:02:23</span><div class="a" style="left:145px;top:196px;width:118px;height:20px;overflow:hidden"><span class="t" style="left:2.5px;top:3px;font-size:14px;color:#111;transform:scaleX(0.9803)">ca.windowspapst.de</span></div><span class="t" style="left:267.2px;top:199px;font-size:14px;color:#111;transform:scaleX(0.9248)">Process Access</span><div class="a" style="left:485px;top:196px;width:45px;height:19px;background:#ff9800;border-radius:3px"></div><span class="t" style="left:489.2px;top:201px;font-size:10px;color:#fff;transform:scaleX(1.0119)">Medium</span><span class="t" style="left:552.2px;top:199px;font-size:14px;color:#111;transform:scaleX(0.9639)">wmiprvse.exe</span><span class="t" style="left:732.4px;top:199px;font-size:14px;color:#111;transform:scaleX(0.9571)">C:\WINDOWS\system32\lsass.exe</span><span class="t" style="left:1127.2px;top:199px;font-size:14px;color:#111;transform:scaleX(0.9841)">S-1-5-18</span><div class="a" style="left:0;top:216px;width:1255px;height:19px;background:#fbeeed;border-bottom:1px solid #e0e0e0"></div><span class="t" style="left:3.3px;top:219px;font-size:14px;color:#111;transform:scaleX(0.9317)">10.02.2026 13:02:23</span><div class="a" style="left:145px;top:216px;width:118px;height:19px;overflow:hidden"><span class="t" style="left:2.5px;top:3px;font-size:14px;color:#111;transform:scaleX(0.9621)">CA.windowspapst.de</span></div><span class="t" style="left:267.2px;top:219px;font-size:14px;color:#111;transform:scaleX(0.9248)">Process Access</span><div class="a" style="left:485px;top:216px;width:45px;height:18px;background:#ff9800;border-radius:3px"></div><span class="t" style="left:489.2px;top:221px;font-size:10px;color:#fff;transform:scaleX(1.0119)">Medium</span><span class="t" style="left:552.2px;top:219px;font-size:14px;color:#111;transform:scaleX(0.9639)">wmiprvse.exe</span><span class="t" style="left:732.4px;top:219px;font-size:14px;color:#111;transform:scaleX(0.9571)">C:\WINDOWS\system32\lsass.exe</span><span class="t" style="left:1127.2px;top:219px;font-size:14px;color:#111;transform:scaleX(0.9841)">S-1-5-18</span><div class="a" style="left:0;top:235px;width:1255px;height:20px;background:#fbeeed;border-bottom:1px solid #e0e0e0"></div><span class="t" style="left:3.3px;top:238px;font-size:14px;color:#111;transform:scaleX(0.9317)">10.02.2026 13:02:23</span><div class="a" style="left:145px;top:235px;width:118px;height:20px;overflow:hidden"><span class="t" style="left:2.5px;top:3px;font-size:14px;color:#111;transform:scaleX(0.9803)">ca.windowspapst.de</span></div><span class="t" style="left:267.2px;top:238px;font-size:14px;color:#111;transform:scaleX(0.9248)">Process Access</span><div class="a" style="left:485px;top:235px;width:45px;height:19px;background:#ff9800;border-radius:3px"></div><span class="t" style="left:489.2px;top:240px;font-size:10px;color:#fff;transform:scaleX(1.0119)">Medium</span><span class="t" style="left:552.2px;top:238px;font-size:14px;color:#111;transform:scaleX(0.9639)">wmiprvse.exe</span><span class="t" style="left:732.4px;top:238px;font-size:14px;color:#111;transform:scaleX(0.9571)">C:\WINDOWS\system32\lsass.exe</span><span class="t" style="left:1127.2px;top:238px;font-size:14px;color:#111;transform:scaleX(0.9841)">S-1-5-18</span><div class="a" style="left:0;top:255px;width:1255px;height:19px;background:#fbeeed;border-bottom:1px solid #e0e0e0"></div><span class="t" style="left:3.3px;top:258px;font-size:14px;color:#111;transform:scaleX(0.9317)">10.02.2026 13:02:23</span><div class="a" style="left:145px;top:255px;width:118px;height:19px;overflow:hidden"><span class="t" style="left:2.5px;top:3px;font-size:14px;color:#111;transform:scaleX(0.9621)">CA.windowspapst.de</span></div><span class="t" style="left:267.2px;top:258px;font-size:14px;color:#111;transform:scaleX(0.9248)">Process Access</span><div class="a" style="left:485px;top:255px;width:45px;height:18px;background:#ff9800;border-radius:3px"></div><span class="t" style="left:489.2px;top:260px;font-size:10px;color:#fff;transform:scaleX(1.0119)">Medium</span><span class="t" style="left:552.2px;top:258px;font-size:14px;color:#111;transform:scaleX(0.9639)">wmiprvse.exe</span><span class="t" style="left:732.4px;top:258px;font-size:14px;color:#111;transform:scaleX(0.9571)">C:\WINDOWS\system32\lsass.exe</span><span class="t" style="left:1127.2px;top:258px;font-size:14px;color:#111;transform:scaleX(0.9841)">S-1-5-18</span><div class="a" style="left:0;top:274px;width:1255px;height:20px;background:#fbeeed;border-bottom:1px solid #e0e0e0"></div><span class="t" style="left:3.3px;top:277px;font-size:14px;color:#111;transform:scaleX(0.9317)">10.02.2026 13:02:23</span><div class="a" style="left:145px;top:274px;width:118px;height:20px;overflow:hidden"><span class="t" style="left:2.5px;top:3px;font-size:14px;color:#111;transform:scaleX(0.9803)">ca.windowspapst.de</span></div><span class="t" style="left:267.2px;top:277px;font-size:14px;color:#111;transform:scaleX(0.9248)">Process Access</span><div class="a" style="left:485px;top:274px;width:45px;height:19px;background:#ff9800;border-radius:3px"></div><span class="t" style="left:489.2px;top:280px;font-size:10px;color:#fff;transform:scaleX(1.0119)">Medium</span><span class="t" style="left:552.2px;top:277px;font-size:14px;color:#111;transform:scaleX(0.9639)">wmiprvse.exe</span><span class="t" style="left:732.4px;top:277px;font-size:14px;color:#111;transform:scaleX(0.9571)">C:\WINDOWS\system32\lsass.exe</span><span class="t" style="left:1127.2px;top:277px;font-size:14px;color:#111;transform:scaleX(0.9841)">S-1-5-18</span><div class="a" style="left:0;top:294px;width:1255px;height:20px;background:#fbeeed;border-bottom:1px solid #e0e0e0"></div><span class="t" style="left:3.3px;top:297px;font-size:14px;color:#111;transform:scaleX(0.9317)">10.02.2026 13:02:23</span><div class="a" style="left:145px;top:294px;width:118px;height:20px;overflow:hidden"><span class="t" style="left:2.5px;top:3px;font-size:14px;color:#111;transform:scaleX(0.9621)">CA.windowspapst.de</span></div><span class="t" style="left:267.2px;top:297px;font-size:14px;color:#111;transform:scaleX(0.9248)">Process Access</span><div class="a" style="left:485px;top:294px;width:45px;height:19px;background:#ff9800;border-radius:3px"></div><span class="t" style="left:489.2px;top:299px;font-size:10px;color:#fff;transform:scaleX(1.0119)">Medium</span><span class="t" style="left:552.2px;top:297px;font-size:14px;color:#111;transform:scaleX(0.9639)">wmiprvse.exe</span><span class="t" style="left:732.4px;top:297px;font-size:14px;color:#111;transform:scaleX(0.9571)">C:\WINDOWS\system32\lsass.exe</span><span class="t" style="left:1127.2px;top:297px;font-size:14px;color:#111;transform:scaleX(0.9841)">S-1-5-18</span><div class="a" style="left:0;top:314px;width:1255px;height:19px;background:#fbeeed;border-bottom:1px solid #e0e0e0"></div><span class="t" style="left:3.3px;top:317px;font-size:14px;color:#111;transform:scaleX(0.9317)">10.02.2026 13:02:23</span><div class="a" style="left:145px;top:314px;width:118px;height:19px;overflow:hidden"><span class="t" style="left:2.5px;top:3px;font-size:14px;color:#111;transform:scaleX(0.9803)">ca.windowspapst.de</span></div><span class="t" style="left:267.2px;top:317px;font-size:14px;color:#111;transform:scaleX(0.9248)">Process Access</span><div class="a" style="left:485px;top:314px;width:45px;height:18px;background:#ff9800;border-radius:3px"></div><span class="t" style="left:489.2px;top:319px;font-size:10px;color:#fff;transform:scaleX(1.0119)">Medium</span><span class="t" style="left:552.2px;top:317px;font-size:14px;color:#111;transform:scaleX(0.9639)">wmiprvse.exe</span><span class="t" style="left:732.4px;top:317px;font-size:14px;color:#111;transform:scaleX(0.9571)">C:\WINDOWS\system32\lsass.exe</span><span class="t" style="left:1127.2px;top:317px;font-size:14px;color:#111;transform:scaleX(0.9841)">S-1-5-18</span><div class="a" style="left:0;top:333px;width:1255px;height:20px;background:#fbeeed;border-bottom:1px solid #e0e0e0"></div><span class="t" style="left:3.3px;top:336px;font-size:14px;color:#111;transform:scaleX(0.9317)">10.02.2026 13:02:23</span><div class="a" style="left:145px;top:333px;width:118px;height:20px;overflow:hidden"><span class="t" style="left:2.5px;top:3px;font-size:14px;color:#111;transform:scaleX(0.9621)">CA.windowspapst.de</span></div><span class="t" style="left:267.2px;top:336px;font-size:14px;color:#111;transform:scaleX(0.9248)">Process Access</span><div class="a" style="left:493px;top:333px;width:28.5px;height:19px;background:#f57c00;border-radius:3px"></div><span class="t" style="left:497.2px;top:339px;font-size:10px;color:#fff;transform:scaleX(0.9719)">High</span><span class="t" style="left:552.2px;top:336px;font-size:14px;color:#111;transform:scaleX(0.9941)">vmtoolsd.exe</span><span class="t" style="left:732.4px;top:336px;font-size:14px;color:#111;transform:scaleX(0.9571)">C:\WINDOWS\system32\lsass.exe</span><span class="t" style="left:1127.2px;top:336px;font-size:14px;color:#111;transform:scaleX(0.9841)">S-1-5-18</span><div class="a" style="left:0;top:353px;width:1255px;height:20px;background:#fbeeed;border-bottom:1px solid #e0e0e0"></div><span class="t" style="left:3.3px;top:356px;font-size:14px;color:#111;transform:scaleX(0.9317)">10.02.2026 13:02:23</span><div class="a" style="left:145px;top:353px;width:118px;height:20px;overflow:hidden"><span class="t" style="left:2.5px;top:3px;font-size:14px;color:#111;transform:scaleX(0.9803)">ca.windowspapst.de</span></div><span class="t" style="left:267.2px;top:356px;font-size:14px;color:#111;transform:scaleX(0.9248)">Process Access</span><div class="a" style="left:493px;top:353px;width:28.5px;height:19px;background:#f57c00;border-radius:3px"></div><span class="t" style="left:497.2px;top:358px;font-size:10px;color:#fff;transform:scaleX(0.9719)">High</span><span class="t" style="left:552.2px;top:356px;font-size:14px;color:#111;transform:scaleX(0.9941)">vmtoolsd.exe</span><span class="t" style="left:732.4px;top:356px;font-size:14px;color:#111;transform:scaleX(0.9571)">C:\WINDOWS\system32\lsass.exe</span><span class="t" style="left:1127.2px;top:356px;font-size:14px;color:#111;transform:scaleX(0.9841)">S-1-5-18</span></div>
<div class="a" style="left:1542px;top:526px;width:17px;height:366px;background:#f0f0f0"></div>
<div class="a" style="left:1542px;top:543px;width:17px;height:77.5px;background:#cdcdcd"></div>
<svg style="left:1546px;top:531px" width="9" height="6" viewBox="0 0 9 6"><path d="M1 5 L4.5 1.4 L8 5" fill="none" stroke="#606060" stroke-width="1.1"/></svg>
<svg style="left:1546px;top:881px" width="9" height="6" viewBox="0 0 9 6"><path d="M1 1 L4.5 4.6 L8 1" fill="none" stroke="#606060" stroke-width="1.1"/></svg>
<div class="a" style="left:286px;top:904px;width:1274px;height:50px;background:#fff;border-radius:8px"></div>
<span class="t" style="left:301.3px;top:924px;font-size:12px;color:#888;transform:scaleX(0.9668)">CA.windowspapst.de: 55,041  |  ca.windowspapst.de: 46,455  |  DC: 35,889  |  MS2.windowspapst.de: 34,610  |  MS1.windowspapst.de: 33,678</span>
<div class="a" style="left:1051px;top:913.5px;width:1px;height:30px;background:#c4c4c4"></div>
<div class="a" style="left:1067px;top:914px;width:101px;height:30px;border:1px solid #2196f3;border-radius:4px;background:#fff"></div>
<span class="t" style="left:1078.2px;top:922px;font-size:14px;color:#2196f3;transform:scaleX(0.9806)">Aktualisieren</span>
<div class="a" style="left:1178px;top:914px;width:92px;height:30px;border:1px solid #ddd;border-radius:4px;background:#fff"></div>
<span class="t" style="left:1189.4px;top:922px;font-size:14px;color:#757575;transform:scaleX(1.0078)">Optimieren</span>
<div class="a" style="left:1280px;top:914px;width:96.5px;height:30px;border:1px solid #ddd;border-radius:4px;background:#fff"></div>
<span class="t" style="left:1291.3px;top:922px;font-size:14px;color:#757575;transform:scaleX(0.9414)">Bereinigen...</span>
<div class="a" style="left:1377px;top:914px;width:90px;height:30px;border:1px solid #ddd;border-radius:4px;background:#fff"></div>
<span class="t" style="left:1387.5px;top:922px;font-size:14px;color:#757575;transform:scaleX(0.9297)">CSV Export</span>
<div class="a" style="left:1487px;top:913.5px;width:1px;height:30px;background:#c4c4c4"></div>
<div class="a" style="left:1500px;top:920px;width:44px;height:20px;overflow:hidden;"><span class="t" style="left:2.8px;top:3px;font-size:13px;color:#757575;transform:scaleX(0.8923)">77 Events</span></div>
<span class="t" style="left:1601.4px;top:267px;font-size:16px;color:#212121;-webkit-text-stroke:0.61px currentColor;transform:scaleX(0.9942)">Event-Details</span>
<div class="a" style="left:1601px;top:299.4px;width:85px;height:26px;background:#2196f3;border-radius:4px"></div>
<span class="t" style="left:1611.3px;top:307px;font-size:12px;color:#fff;-webkit-text-stroke:0.49px currentColor;transform:scaleX(1.0744)">Information</span>
<div class="a" style="left:1601px;top:340px;width:289px;height:178px;border:1px solid #e0e0e0;border-radius:4px;background:#fff"></div>
<span class="t" style="left:1617.3px;top:359px;font-size:12px;color:#212121;-webkit-text-stroke:0.49px currentColor;transform:scaleX(0.9933)">Basis-Info</span>
<span class="t" style="left:1617.3px;top:387px;font-size:12px;color:#222;transform:scaleX(0.9614)">Record ID: 4347114</span>
<span class="t" style="left:1617.3px;top:407px;font-size:12px;color:#222;transform:scaleX(0.9490)">Zeit: 10.02.2026 13:10:59</span>
<span class="t" style="left:1617.3px;top:427px;font-size:12px;color:#222;transform:scaleX(0.9558)">Event ID: DnsQuery</span>
<span class="t" style="left:1617.3px;top:447px;font-size:12px;color:#222;transform:scaleX(0.9615)">DNS Query</span>
<span class="t" style="left:1617.3px;top:467px;font-size:12px;color:#222;transform:scaleX(0.9780)">Computer: DC</span>
<span class="t" style="left:1617.3px;top:487px;font-size:12px;color:#222;transform:scaleX(0.9764)">Benutzer: S-1-5-18</span>
<div class="a" style="left:1606px;top:533px;width:279px;height:378px;border:1px solid #e0e0e0;border-radius:4px;background:#fff"></div>
<span class="t" style="left:1622.2px;top:552px;font-size:12px;color:#212121;-webkit-text-stroke:0.49px currentColor;transform:scaleX(0.9895)">Event-Daten</span>
<span class="t" style="left:1622.2px;top:578px;font-size:10px;color:#808080;transform:scaleX(0.9608)">RuleName</span>
<span class="t" style="left:1622.2px;top:591px;font-size:11px;color:#222;transform:scaleX(0.9532)">-</span>
<span class="t" style="left:1622.2px;top:612px;font-size:10px;color:#808080;transform:scaleX(0.9821)">UtcTime</span>
<span class="t" style="left:1622.2px;top:625px;font-size:11px;color:#222;transform:scaleX(0.9663)">2026-02-10 12:10:57.136</span>
<span class="t" style="left:1622.2px;top:646px;font-size:10px;color:#808080;transform:scaleX(0.9432)">ProcessGuid</span>
<span class="t" style="left:1622.2px;top:659px;font-size:11px;color:#222;transform:scaleX(0.9850)">{da78da22-2051-698b-7301-000000004100}</span>
<span class="t" style="left:1622.2px;top:680px;font-size:10px;color:#808080;transform:scaleX(0.9332)">ProcessId</span>
<span class="t" style="left:1622.2px;top:693px;font-size:11px;color:#222;transform:scaleX(0.9639)">3024</span>
<span class="t" style="left:1622.2px;top:713px;font-size:10px;color:#808080;transform:scaleX(0.9758)">QueryName</span>
<span class="t" style="left:1622.2px;top:727px;font-size:11px;color:#222;transform:scaleX(0.9802)">DC.windowspapst.de</span>
<span class="t" style="left:1622.2px;top:747px;font-size:10px;color:#808080;transform:scaleX(0.9533)">QueryStatus</span>
<span class="t" style="left:1622.2px;top:760px;font-size:11px;color:#222;transform:scaleX(0.9633)">0</span>
<span class="t" style="left:1622.2px;top:781px;font-size:10px;color:#808080;transform:scaleX(0.9475)">QueryResults</span>
<span class="t" style="left:1622.2px;top:794px;font-size:11px;color:#222;transform:scaleX(0.8092)">::1</span>
<span class="t" style="left:1622.2px;top:809px;font-size:11px;color:#222;transform:scaleX(0.9585)">::ffff:172.18.32.30</span>
<span class="t" style="left:1622.2px;top:829px;font-size:10px;color:#808080;transform:scaleX(0.9785)">Image</span>
<span class="t" style="left:1622.2px;top:843px;font-size:11px;color:#222;transform:scaleX(0.9814)">C:\Windows\System32\backgroundTaskHost.exe</span>
<span class="t" style="left:1622.2px;top:863px;font-size:10px;color:#808080;transform:scaleX(0.9325)">User</span>
<span class="t" style="left:1622.2px;top:876px;font-size:11px;color:#222;transform:scaleX(0.9767)">DWP\jw</span>
<div class="a" style="left:16px;top:991px;width:10px;height:10px;background:#4caf50;border-radius:50%"></div>
<span class="t" style="left:34.3px;top:991px;font-size:12px;color:#555;transform:scaleX(0.9627)">Verbunden: DC</span>
<span class="t" style="left:936.6px;top:991px;font-size:12px;color:#555;transform:scaleX(0.9739)">Verbinde mit Event Log...</span>
</body></html>
